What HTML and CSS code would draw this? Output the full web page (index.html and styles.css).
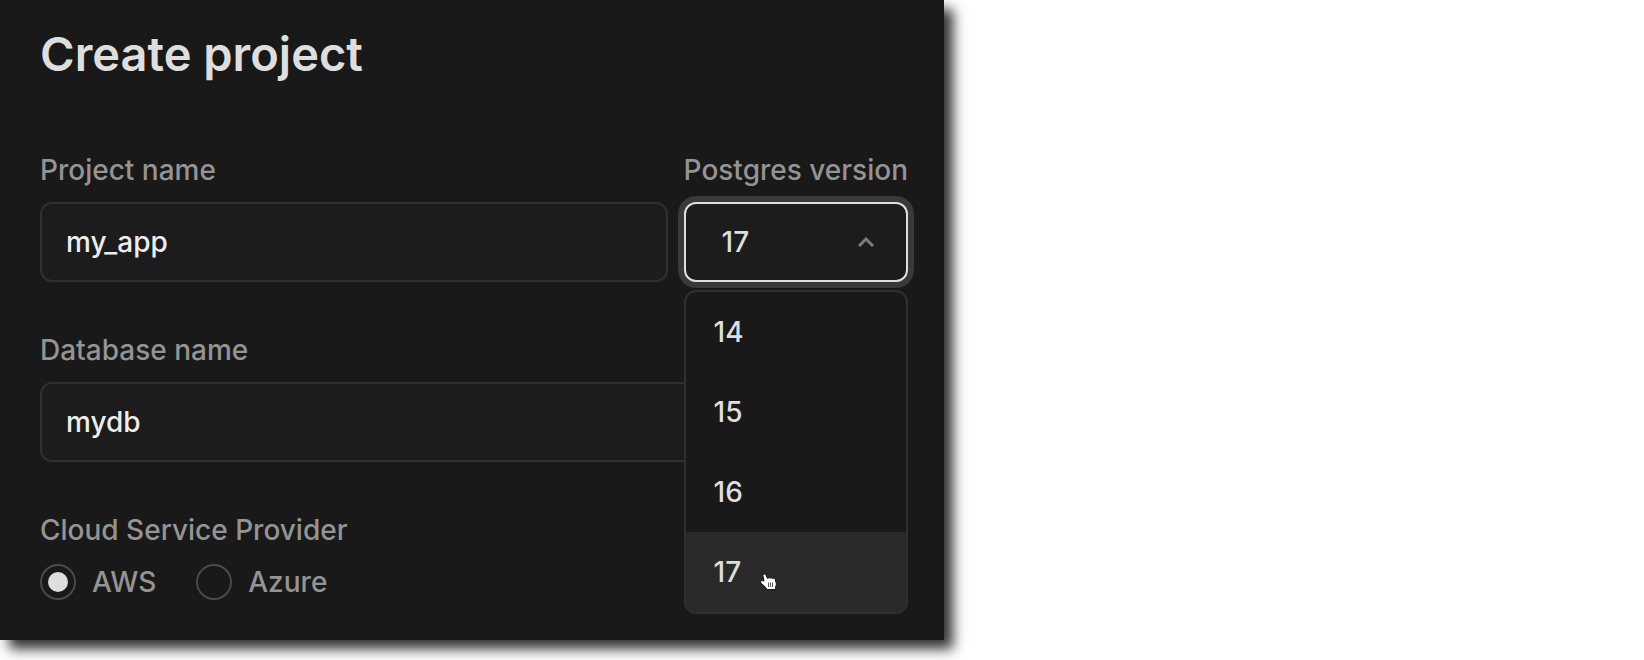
FILE: index.html
```
<!DOCTYPE html>
<html lang="en">
<head>
<meta charset="utf-8">
<meta name="viewport" content="width=device-width, initial-scale=1">
<title>Create project</title>
<link rel="stylesheet" href="styles.css">
</head>
<body>
<main class="panel">
  <h1 class="title">Create project</h1>
  <form class="form">
    <div class="row">
      <div class="field field-grow">
        <label class="label" for="project-name">Project name</label>
        <input class="input" id="project-name" type="text" value="my_app">
      </div>
      <div class="field">
        <label class="label" for="pg-version">Postgres version</label>
        <div class="picker">
          <select class="select" id="pg-version">
            <option selected>17</option>
          </select>
          <svg class="chevron" viewBox="0 0 16 10" aria-hidden="true"><path d="M1 9l7-7 7 7"/></svg>
          <ul class="menu" role="listbox" aria-label="Postgres version">
            <li class="option" role="option">14</li>
            <li class="option" role="option">15</li>
            <li class="option" role="option">16</li>
            <li class="option option-active" role="option" aria-selected="true">17
              <svg class="pointer" viewBox="0 0 18 18" aria-hidden="true">
                <path d="M4 1.200c.9-.3 1.700.2 2 1L7.600 5.500c.8-.9 2-.9 2.600-.2.8-.7 2-.5 2.500.2 1.200-.4 2.300.1 2.600 1.200l.9 3.300c.3 1.300.1 2.500-.6 3.500l.1 3.100H6.800l-1-2.100-4.300-3.900c-.9-.9-1.200-2-.5-2.700.8-.7 2-.5 3 .3L2.900 2.700c-.2-.6.3-1.200 1.100-1.500z"/>
                <path class="pointer-lines" d="M8.500 9.500v4.500M10.500 9.500v4.500M12.500 9.500v4.500"/>
              </svg>
            </li>
          </ul>
        </div>
      </div>
    </div>
    <div class="field">
      <label class="label" for="db-name">Database name</label>
      <input class="input" id="db-name" type="text" value="mydb">
    </div>
    <fieldset class="group">
      <legend class="label">Cloud Service Provider</legend>
      <div class="choices">
        <label class="choice"><input class="radio" type="radio" name="provider" checked>AWS</label>
        <label class="choice"><input class="radio" type="radio" name="provider">Azure</label>
      </div>
    </fieldset>
  </form>
</main>
</body>
</html>
```
FILE: styles.css
```
* {
  box-sizing: border-box;
}

body {
  min-height: 100vh;
  margin: 0;
  padding-bottom: 20px;
  background: #fff;
  font-family: Inter, "Liberation Sans", sans-serif;
  font-size: 28px;
  font-weight: 500;
  line-height: 36px;
}

.panel {
  max-width: 944px;
  padding: 26px 36px 40px 40px;
  background: #191919;
  box-shadow: 9px 9px 12px #333;
}

.title {
  margin: 0 0 70px;
  color: #dedede;
  font-size: 47px;
  font-weight: 600;
  line-height: 56px;
}

.form {
  display: flex;
  flex-direction: column;
  gap: 50px;
}

.row {
  display: flex;
  gap: 16px;
}

.field {
  display: flex;
  flex-direction: column;
  gap: 14px;
}

.field-grow {
  flex: 1;
  min-width: 0;
}

.label {
  padding: 0;
  color: #949494;
}

.input,
.select {
  width: 100%;
  height: 80px;
  border: 2px solid #303030;
  border-radius: 12px;
  background: #1c1c1c;
  color: #ededed;
  font: inherit;
  outline: none;
}

.input {
  padding: 0 24px;
}

.picker {
  position: relative;
}

.select {
  display: block;
  appearance: none;
  padding: 0 36px;
  border-color: #dedede;
  color: #dedede;
  box-shadow: 0 0 0 6px #393939;
}

.chevron {
  position: absolute;
  top: 35px;
  right: 34px;
  width: 16px;
  height: 10px;
  fill: none;
  stroke: #7c7c7c;
  stroke-width: 3;
  pointer-events: none;
}

.menu {
  position: absolute;
  top: calc(100% + 8px);
  left: 0;
  right: 0;
  z-index: 1;
  margin: 0;
  padding: 0;
  overflow: hidden;
  border: 2px solid #303030;
  border-radius: 12px;
  background: #191919;
  color: #dedede;
  list-style: none;
}

.option {
  position: relative;
  padding: 22px 28px;
  cursor: pointer;
}

.option-active {
  background: #2a2a2a;
}

.pointer {
  position: absolute;
  top: 41px;
  left: 74px;
  width: 18px;
  height: 18px;
  fill: #fff;
  stroke: #111;
  stroke-width: 1;
}

.pointer-lines {
  stroke: #555;
}

.group {
  min-width: 0;
  margin: 0;
  padding: 0;
  border: 0;
}

.choices {
  display: flex;
  gap: 40px;
  margin-top: 16px;
}

.choice {
  display: flex;
  align-items: center;
  gap: 16px;
  color: #949494;
}

.radio {
  display: grid;
  place-items: center;
  appearance: none;
  width: 36px;
  height: 36px;
  margin: 0;
  border: 2px solid #494949;
  border-radius: 50%;
}

.radio:checked::before {
  content: "";
  width: 20px;
  height: 20px;
  border-radius: 50%;
  background: #dedede;
}
```
